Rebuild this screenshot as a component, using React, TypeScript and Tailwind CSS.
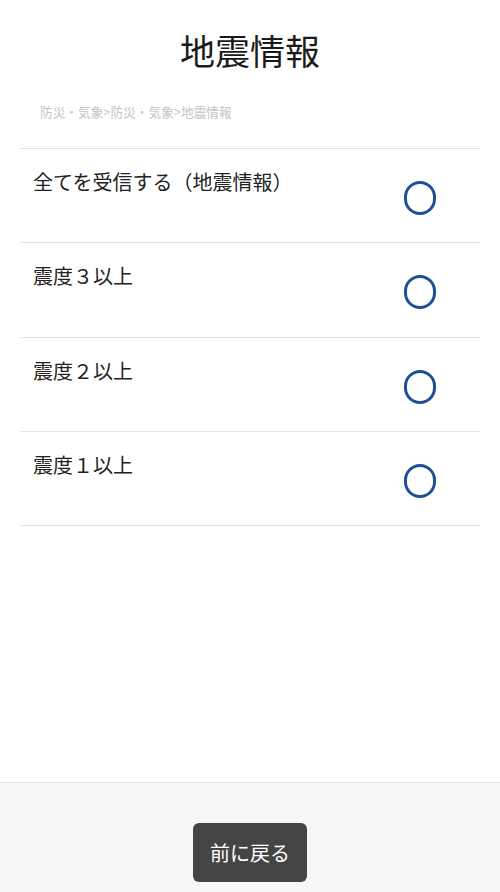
import React from "react";

const items = [
  "全てを受信する（地震情報）",
  "震度３以上",
  "震度２以上",
  "震度１以上",
];

const App = () => {
  return (
    <div
      className="flex h-[892px] w-full flex-col bg-white text-[#222]"
      style={{ fontFamily: '"Noto Sans CJK JP", "Noto Sans", sans-serif' }}
    >
      <div className="flex-1">
        <h1 className="pt-[32px] text-center text-[35px] leading-[36px] font-normal text-[#1a1a1a]">
          地震情報
        </h1>
        <p className="mt-[34px] pl-[40px] text-[12.7px] leading-[20px] text-[#c4c4c4]">
          防災・気象&gt;防災・気象&gt;地震情報
        </p>
        <ul className="mx-5 mt-[26px] border-t border-[#e3e3e3]">
          {items.map((label) => (
            <li
              key={label}
              className="flex h-[94.3px] items-start justify-between border-b border-[#e3e3e3] pr-[44px] pl-[13px]"
            >
              <span className="pt-[18px] text-[20px] leading-[30px]">{label}</span>
              <span className="mt-[32px] h-[34px] w-[32px] rounded-full border-[3px] border-[#1f4f95]" />
            </li>
          ))}
        </ul>
      </div>
      <div className="flex h-[110px] justify-center border-t border-[#e6e6e6] bg-[#f7f7f7] pt-[40px]">
        <button className="h-[59px] w-[114px] rounded-md bg-[#444] text-[20px] text-white">
          前に戻る
        </button>
      </div>
    </div>
  );
};

export default App;
